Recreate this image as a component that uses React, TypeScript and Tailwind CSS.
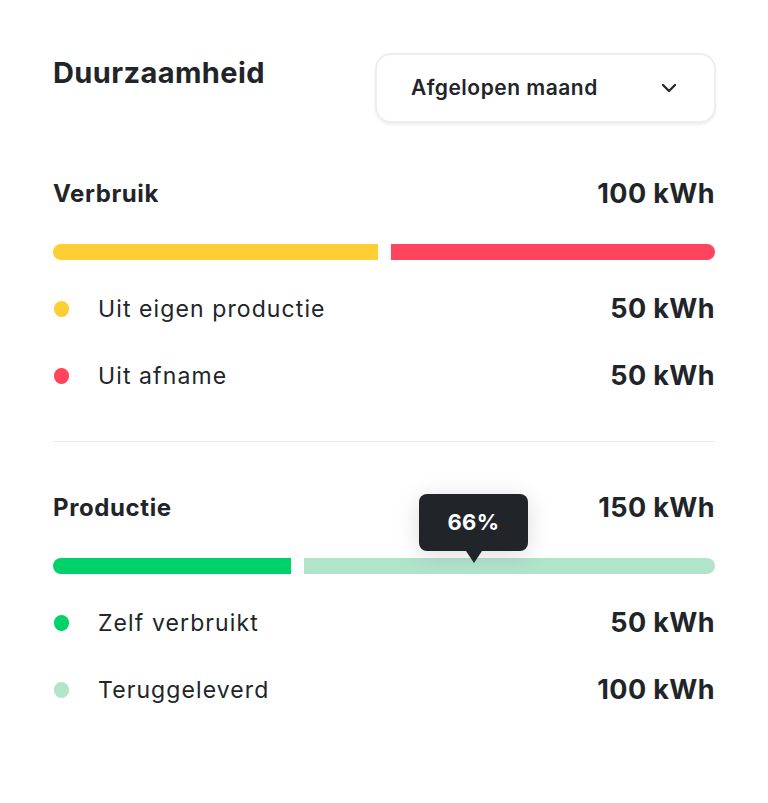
import { ChevronDown } from "lucide-react";

const font = { fontFamily: "Inter, 'Noto Sans', sans-serif" };

const Row = (props: { color: string; label: string; value: string; className?: string }) => {
  return (
    <div className={"flex items-center justify-between h-8 " + (props.className || "")}>
      <div className="flex items-center">
        <span className={"w-[15px] h-[16px] rounded-full ml-[1px] " + props.color} />
        <span className="ml-[29px] text-[23px] leading-8 text-[#212529] tracking-[1.1px]">{props.label}</span>
      </div>
      <span className="text-[27px] leading-8 font-bold text-[#212529] tracking-[0.4px]">{props.value}</span>
    </div>
  );
};

export default function App() {
  return (
    <div className="w-[768px] h-[803px] bg-white px-[53px] pt-[53px]" style={font}>
      {/* header */}
      <div className="flex items-start justify-between">
        <h1 className="mt-[4px] text-[29px] leading-8 font-bold text-[#212529] tracking-[0.4px]">Duurzaamheid</h1>
        <button className="w-[341px] h-[70px] mr-[-1px] flex items-center justify-between pl-[34px] pr-[33px] rounded-2xl border-2 border-[#eceef0] bg-white shadow-[0_2px_3px_rgba(0,0,0,0.06)]">
          <span className="text-[21px] font-semibold text-[#212529] tracking-[0.5px]">Afgelopen maand</span>
          <ChevronDown size={24} strokeWidth={2.25} className="text-[#212529]" />
        </button>
      </div>

      {/* verbruik */}
      <div className="mt-[55px] flex items-center justify-between h-8">
        <span className="text-[24px] leading-8 font-bold text-[#212529] tracking-[0.6px]">Verbruik</span>
        <span className="text-[27px] leading-8 font-bold text-[#212529] tracking-[0.4px]">100 kWh</span>
      </div>
      <div className="mt-[34px] flex h-4 gap-[13px]">
        <div className="w-[325px] bg-[#ffcd34] rounded-l-full" />
        <div className="flex-1 bg-[#ff445e] rounded-r-full" />
      </div>
      <Row className="mt-[33px]" color="bg-[#ffcd34]" label="Uit eigen productie" value="50 kWh" />
      <Row className="mt-[35px]" color="bg-[#ff445e]" label="Uit afname" value="50 kWh" />

      <div className="mt-[49px] h-px bg-[#e9ecef]" />

      {/* productie */}
      <div className="mt-[50px] flex items-center justify-between h-8">
        <span className="text-[24px] leading-8 font-bold text-[#212529] tracking-[0.6px]">Productie</span>
        <span className="text-[27px] leading-8 font-bold text-[#212529] tracking-[0.4px]">150 kWh</span>
      </div>
      <div className="relative mt-[34px] flex h-4 gap-[13px]">
        <div className="w-[238px] bg-[#00d26a] rounded-l-full" />
        <div className="flex-1 bg-[#b2e4cc] rounded-r-full" />
        <div className="absolute left-[366px] top-[-64px] flex flex-col items-center">
          <div className="w-[109px] h-[57px] rounded-lg bg-[#212529] flex items-center justify-center shadow-[0_4px_24px_rgba(0,0,0,0.14)]">
            <span className="text-[22px] font-bold text-white tracking-[0.4px]">66%</span>
          </div>
          <div className="w-0 h-0 border-l-[8px] border-r-[8px] border-t-[12px] border-l-transparent border-r-transparent border-t-[#212529]" />
        </div>
      </div>
      <Row className="mt-[33px]" color="bg-[#00d26a]" label="Zelf verbruikt" value="50 kWh" />
      <Row className="mt-[35px]" color="bg-[#b2e4cc]" label="Teruggeleverd" value="100 kWh" />
    </div>
  );
}
